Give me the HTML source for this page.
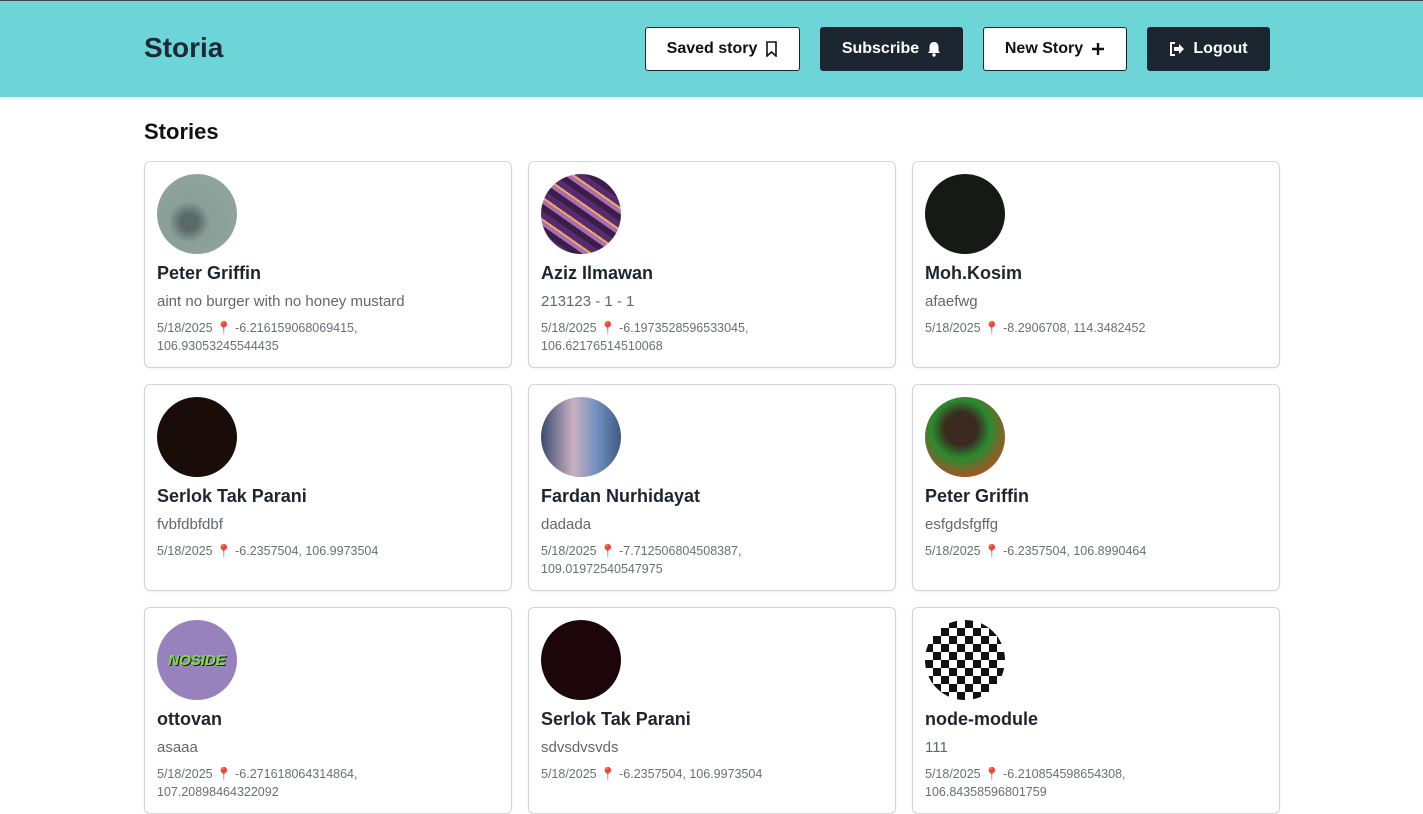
<!DOCTYPE html>
<html><head><meta charset="utf-8"><style>
*{box-sizing:border-box;margin:0;padding:0}
body{width:1423px;height:813px;overflow:hidden;background:#fff;font-family:"Liberation Sans","DejaVu Sans",sans-serif;color:#1c2630}
header{height:97px;background:#6dd5d8;border-top:1px solid #3a4a4a;position:relative;box-shadow:0 1px 3px rgba(0,0,0,.15)}
.logo{position:absolute;left:144px;top:31px;font-size:28px;font-weight:bold;color:#1c2a33}
.btn{position:absolute;top:26px;height:44px;border-radius:3px;font-size:16px;font-weight:bold;display:flex;align-items:center;justify-content:center;gap:8px;border:1px solid #1c2630}
.w{background:#fff;color:#111}.d{background:#1c2630;color:#fff}
h2{position:absolute;left:144px;top:119px;font-size:22px;font-weight:bold;color:#111}
.card{position:absolute;width:368px;height:207px;border:1px solid #d4d4d4;border-radius:6px;padding:12px;box-shadow:0 1px 2px rgba(0,0,0,.06)}
.av{width:80px;height:80px;border-radius:50%;overflow:hidden}
.n{font-size:18px;font-weight:bold;margin-top:8px;line-height:22px;color:#1c2630}
.s{font-size:15px;color:#5f6870;margin-top:8px;line-height:20px}
.m{font-size:12.5px;color:#6a6f75;margin-top:7px;line-height:18px}
.pin{color:#d6232b}
</style></head><body>
<header>
<div class="logo">Storia</div>
<div class="btn w" style="left:645px;width:155px">Saved story <svg width="13" height="16" viewBox="0 0 13 16"><path d="M2 1h9v14l-4.5-4L2 15z" fill="none" stroke="#111" stroke-width="1.6"/></svg></div>
<div class="btn d" style="left:820px;width:143px">Subscribe <svg width="14" height="16" viewBox="0 0 14 16"><path d="M7 1c3 0 4.5 2.3 4.5 5v4l1.5 2H1l1.5-2V6C2.5 3.3 4 1 7 1z" fill="#fff"/><circle cx="7" cy="14" r="1.7" fill="#fff"/></svg></div>
<div class="btn w" style="left:983px;width:144px">New Story <svg width="14" height="14" viewBox="0 0 14 14"><path d="M7 1v12M1 7h12" stroke="#111" stroke-width="2.4"/></svg></div>
<div class="btn d" style="left:1147px;width:123px"><svg width="16" height="14" viewBox="0 0 16 14"><path d="M6 1H2v12h4" fill="none" stroke="#fff" stroke-width="2"/><path d="M5 5h5V2l5 5-5 5V9H5z" fill="#fff"/></svg> Logout</div>
</header>
<h2>Stories</h2>

<div class="card" style="left:144px;top:161px"><div class="av" style="background:radial-gradient(circle at 40% 60%,#5a6a66 0 12%,#8a9f98 30%,#93a8a2)"></div><div class="n">Peter Griffin</div><div class="s">aint no burger with no honey mustard</div><div class="m">5/18/2025 <span class="pin">📍</span> -6.216159068069415,<br>106.93053245544435</div></div>
<div class="card" style="left:528px;top:161px"><div class="av" style="background:repeating-linear-gradient(35deg,#3a1e4a 0 6px,#b06ab0 6px 10px,#e0b060 10px 12px,#5a2a70 12px 18px)"></div><div class="n">Aziz Ilmawan</div><div class="s">213123 - 1 - 1</div><div class="m">5/18/2025 <span class="pin">📍</span> -6.1973528596533045,<br>106.62176514510068</div></div>
<div class="card" style="left:912px;top:161px"><div class="av" style="background:#161a14"></div><div class="n">Moh.Kosim</div><div class="s">afaefwg</div><div class="m">5/18/2025 <span class="pin">📍</span> -8.2906708, 114.3482452</div></div>

<div class="card" style="left:144px;top:384px"><div class="av" style="background:#1a0c08"></div><div class="n">Serlok Tak Parani</div><div class="s">fvbfdbfdbf</div><div class="m">5/18/2025 <span class="pin">📍</span> -6.2357504, 106.9973504</div></div>
<div class="card" style="left:528px;top:384px"><div class="av" style="background:linear-gradient(90deg,#3a4a70,#c8b0c0 40%,#7090c0 70%,#405a80)"></div><div class="n">Fardan Nurhidayat</div><div class="s">dadada</div><div class="m">5/18/2025 <span class="pin">📍</span> -7.712506804508387,<br>109.01972540547975</div></div>
<div class="card" style="left:912px;top:384px"><div class="av" style="background:radial-gradient(circle at 45% 40%,#3a2a20 0 25%,#2a8a30 45%,#d04020 85%)"></div><div class="n">Peter Griffin</div><div class="s">esfgdsfgffg</div><div class="m">5/18/2025 <span class="pin">📍</span> -6.2357504, 106.8990464</div></div>

<div class="card" style="left:144px;top:607px"><div class="av" style="background:#9882bd;display:flex;align-items:center;justify-content:center;font-weight:bold;font-style:italic;color:#7fe040;font-size:15px;text-shadow:1px 1px 0 #111">NOSIDE</div><div class="n">ottovan</div><div class="s">asaaa</div><div class="m">5/18/2025 <span class="pin">📍</span> -6.271618064314864,<br>107.20898464322092</div></div>
<div class="card" style="left:528px;top:607px"><div class="av" style="background:#1c060c"></div><div class="n">Serlok Tak Parani</div><div class="s">sdvsdvsvds</div><div class="m">5/18/2025 <span class="pin">📍</span> -6.2357504, 106.9973504</div></div>
<div class="card" style="left:912px;top:607px"><div class="av" style="background:repeating-conic-gradient(#111 0 25%,#fff 0 50%) 0 0/16px 16px"></div><div class="n">node-module</div><div class="s">111</div><div class="m">5/18/2025 <span class="pin">📍</span> -6.210854598654308,<br>106.84358596801759</div></div>
</body></html>
